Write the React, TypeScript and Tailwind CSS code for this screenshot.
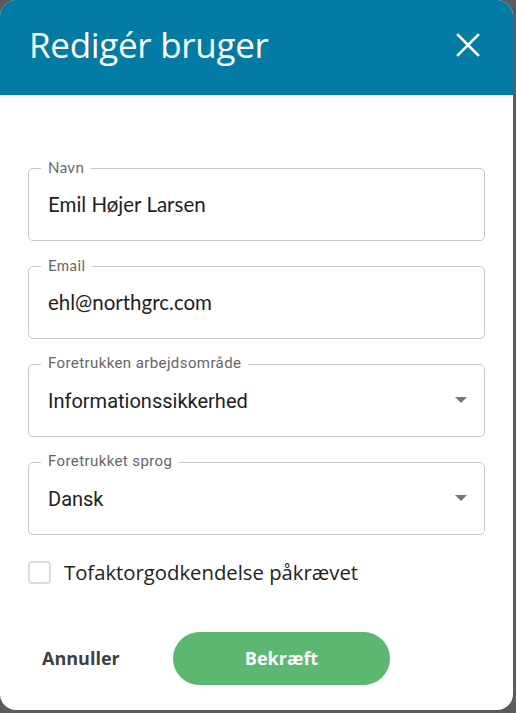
import React from "react";

function Field({ label, value, select, font, labelFont }: { label: string; value: string; select?: boolean; font: string; labelFont: string }) {
  return (
    <div className="relative h-[73px] rounded-[5px] border border-[#c8c8c8] flex items-center justify-between pl-[19px] pr-[17px]">
      <span className={`absolute left-[12px] -top-[11px] bg-white px-[7px] text-[15px] leading-[18px] text-[#666] tracking-[0.4px] ${labelFont}`}>{label}</span>
      <span className={`text-[20.5px] text-[#1e1e1e] ${font}`}>{value}</span>
      {select && (
        <svg width="12" height="7" viewBox="0 0 12 7"><path d="M0 0h12L6 6z" fill="#757575" /></svg>
      )}
    </div>
  );
}

export default function App() {
  return (
    <div className="w-[516px] h-[713px] bg-[#5b5b5b] overflow-hidden">
      <div className="w-[513px] h-[710px] bg-white rounded-[16px] overflow-hidden flex flex-col">
        <div className="h-[95px] shrink-0 bg-[#037ba4] flex items-center justify-between pl-[29px] pr-[33px]">
          <h1 className="text-[35px] text-white font-['Open_Sans',sans-serif] tracking-[-0.3px] -mt-[4px]">Redigér bruger</h1>
          <svg width="24" height="24" viewBox="0 0 24 24" className="-mt-[5px]">
            <path d="M2 2L22 22M22 2L2 22" stroke="white" strokeWidth="2.6" strokeLinecap="square" />
          </svg>
        </div>
        <div className="flex flex-col gap-[25px] ml-[28px] mt-[73px] w-[457px]">
          <Field label="Navn" value="Emil Højer Larsen" font="font-['Lato',sans-serif]" labelFont="font-['Lato',sans-serif]" />
          <Field label="Email" value="ehl@northgrc.com" font="font-['Lato',sans-serif]" labelFont="font-['Lato',sans-serif]" />
          <Field label="Foretrukken arbejdsområde" value="Informationssikkerhed" select font="font-['Roboto',sans-serif] !text-[20px]" labelFont="font-['Roboto',sans-serif]" />
          <Field label="Foretrukket sprog" value="Dansk" select font="font-['Roboto',sans-serif] !text-[20px]" labelFont="font-['Roboto',sans-serif]" />
        </div>
        <div className="flex items-center gap-[13px] px-[28px] mt-[22px]">
          <div className="w-[23px] h-[23px] rounded-[4px] border-2 border-[#dcdcdc]" />
          <span className="text-[20.3px] text-[#222] font-['Open_Sans',sans-serif]">Tofaktorgodkendelse påkrævet</span>
        </div>
        <div className="flex items-center px-[42px] mt-[45px]">
          <span className="text-[18px] font-bold text-[#404040] font-['Open_Sans',sans-serif] w-[131px]">Annuller</span>
          <button className="w-[217px] h-[53px] rounded-full bg-[#5cb871] text-white text-[18px] font-bold font-['Open_Sans',sans-serif]">Bekræft</button>
        </div>
      </div>
    </div>
  );
}
